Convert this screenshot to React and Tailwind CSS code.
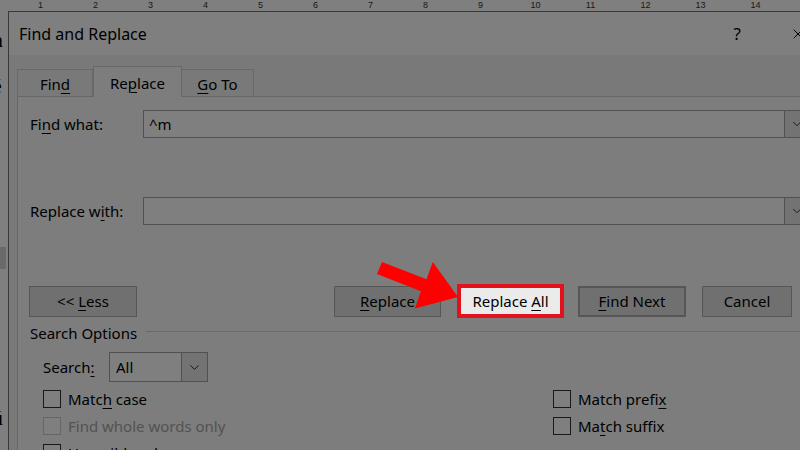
import React from "react";
import { X, ChevronDown } from "lucide-react";

// underlined access key letter
function K({ children }) {
  return <span className="underline underline-offset-[3px] decoration-1">{children}</span>;
}

function Ruler() {
  const nums = Array.from({ length: 14 }, (_, i) => i + 1);
  return (
    <div className="h-[11px] overflow-hidden bg-white flex pl-[13px] text-[9px] leading-none font-['Liberation_Sans',sans-serif] text-[#333]">
      {nums.map((n) => (
        <div key={n} className="w-[55px] shrink-0 text-center pt-[1px]">
          {n}
        </div>
      ))}
    </div>
  );
}

function DocEdge() {
  return (
    <div className="w-[8px] shrink-0 h-[440px] overflow-hidden bg-white flex flex-col font-['Liberation_Serif',serif] text-[22px] leading-none text-black">
      <span className="mt-[18px] -ml-[8px]">n</span>
      <span className="mt-[24px] -ml-[8px]">é</span>
      <div className="mt-[150px] h-[22px] w-[6px] bg-[#d4d4d4]" />
      <span className="mt-[138px] -ml-[8px]">ú</span>
    </div>
  );
}

function Tabs() {
  return (
    <div className="mt-[11px] flex items-end h-[31px] text-[15px]">
      <div className="w-[76px] h-[28px] border border-[#d0d0d0] bg-[#f2f2f2] flex items-center justify-center pt-[2px]">
        <span>
          Fin<K>d</K>
        </span>
      </div>
      <div className="w-[89px] h-[31px] border-t border-x border-[#d0d0d0] bg-[#fbfbfb] flex items-center justify-center pt-[2px]">
        <span>
          Re<K>p</K>lace
        </span>
      </div>
      <div className="w-[72px] h-[28px] border-t border-r border-b border-[#d0d0d0] bg-[#f2f2f2] flex items-center justify-center pt-[2px]">
        <span>
          <K>G</K>o To
        </span>
      </div>
      <div className="flex-1 border-b border-[#d0d0d0]" />
    </div>
  );
}

function ComboRow({ label, value, className = "" }) {
  return (
    <div className={`flex items-center h-[28px] pl-[12px] ${className}`}>
      <div className="w-[113px]">{label}</div>
      <div className="w-[642px] h-[28px] border border-[#a3a3a3] bg-white px-[5px] flex items-center">
        {value}
      </div>
      <div className="w-[18px] h-[28px] border-y border-r border-[#a3a3a3] bg-[#e6e6e6] flex items-center justify-end">
        <ChevronDown size={14} strokeWidth={1.5} className="-mr-[2px] text-[#222]" />
      </div>
    </div>
  );
}

function Btn({ children, className = "" }) {
  return (
    <div className={`h-[31px] border border-[#adadad] bg-[#e1e1e1] flex items-center justify-center shrink-0 ${className}`}>
      <span>{children}</span>
    </div>
  );
}

function Check({ children, disabled }) {
  return (
    <div className="flex items-center h-[18px]">
      <div
        className={`w-[18px] h-[18px] border bg-white ${
          disabled ? "border-[#cccccc]" : "border-[#333]"
        }`}
      />
      <span className={`ml-[7px] ${disabled ? "text-[#a6a6a6]" : ""}`}>{children}</span>
    </div>
  );
}

function Panel() {
  return (
    <div className="h-[360px] w-[795px] border-l border-[#cccccc] bg-[#fbfbfb] pt-[13px]">
      <ComboRow label={<>Fi<K>n</K>d what:</>} value="^m" />
      <ComboRow label={<>Replace w<K>i</K>th:</>} value="" className="mt-[59px]" />

      {/* buttons */}
      <div className="mt-[59px] h-[34px] flex items-center pl-[11px]">
        <Btn className="w-[108px]">
          &lt;&lt; <K>L</K>ess
        </Btn>
        <Btn className="w-[107px] ml-[197px]">
          <K>R</K>eplace
        </Btn>
        <div className="relative z-20 ml-[16px] w-[107px] h-[34px] shrink-0 border-4 border-[#e3111b] bg-[#ebebeb] flex items-center justify-center">
          <span>
            Replace <K>A</K>ll
          </span>
        </div>
        <Btn className="w-[108px] ml-[14px] border-2 border-[#0a6fc4]">
          <K>F</K>ind Next
        </Btn>
        <Btn className="w-[90px] ml-[16px]">Cancel</Btn>
      </div>

      {/* search options */}
      <div className="mt-[5px] h-[20px] flex items-center pl-[12px]">
        <span>Search Options</span>
        <div className="flex-1 ml-[9px] mb-[4px] h-px bg-[#d6d6d6]" />
      </div>

      <div className="mt-[9px] h-[30px] flex items-center pl-[25px]">
        <div className="w-[66px]">
          Search<K>:</K>
        </div>
        <div className="w-[99px] h-[30px] border border-[#a3a3a3] bg-white flex">
          <div className="flex-1 pl-[6px] flex items-center">All</div>
          <div className="w-[26px] border-l border-[#a3a3a3] bg-[#e6e6e6] flex items-center justify-center">
            <ChevronDown size={15} strokeWidth={1.5} className="text-[#222]" />
          </div>
        </div>
      </div>

      <div className="mt-[8px] pl-[25px] grid grid-cols-[510px_1fr] gap-y-[9px]">
        <Check>
          Matc<K>h</K> case
        </Check>
        <Check>
          Match prefi<K>x</K>
        </Check>
        <Check disabled>Find whole words only</Check>
        <Check>
          Ma<K>t</K>ch suffix
        </Check>
        <Check>Use wildcards</Check>
        <div />
      </div>
    </div>
  );
}

function Arrow() {
  return (
    <svg
      className="absolute left-0 top-0 z-30 pointer-events-none"
      width="800"
      height="450"
      viewBox="0 0 800 450"
    >
      <polygon
        fill="#ff0000"
        points="382,262 426.5,279.2 432.8,261.9 458,297 414.8,308.5 421,291.3 377,274"
      />
    </svg>
  );
}

export default function App() {
  return (
    <div className="relative w-[800px] h-[450px] overflow-hidden bg-white font-['Noto_Sans',sans-serif] text-[15px] text-black">
      <Ruler />
      <div className="flex">
        <DocEdge />
        <div className="w-[812px] shrink-0 h-[440px] border-l border-t border-[#707070] bg-[#f2f2f2]">
          <div className="h-[43px] bg-white flex items-center pl-[10px] pr-[14px]">
            <div className="flex-1 text-[16px]">Find and Replace</div>
            <span className="text-[17px]">?</span>
            <X size={16} strokeWidth={1.5} className="ml-[49px]" />
          </div>
          <div className="pl-[8px]">
            <Tabs />
            <Panel />
          </div>
        </div>
      </div>
      {/* dim overlay */}
      <div className="absolute inset-0 z-10 bg-black/50 pointer-events-none" />
      <Arrow />
    </div>
  );
}
